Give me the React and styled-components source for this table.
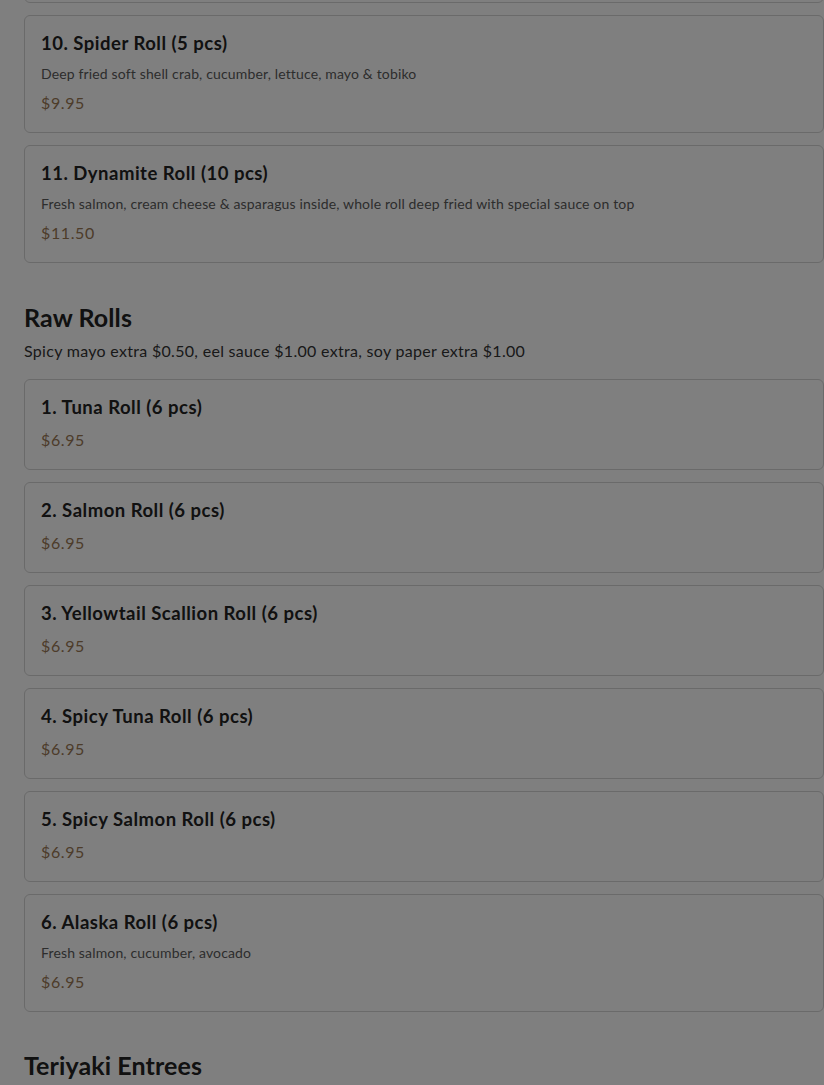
import React from "react";
import styled, { createGlobalStyle } from "styled-components";

const GlobalStyle = createGlobalStyle`
  html, body {
    margin: 0;
    padding: 0;
    background: #fff;
    overflow: hidden;
  }
  body {
    font-family: "Lato", "Noto Sans", sans-serif;
    color: #222;
  }
`;

// scrolled view: the previous card's bottom edge peeks in at the top
const Page = styled.main`
  padding: 0 0 40px 24px;
  margin-top: -115px;
`;

const Section = styled.section`
  margin-bottom: ${(p) => (p.$tight ? "39px" : "40px")};
`;

const SectionTitle = styled.h2`
  margin: 0;
  font-size: 25px;
  line-height: 29px;
  font-weight: 700;
  letter-spacing: 0.1px;
  color: #222;
`;

const SectionNote = styled.p`
  margin: 7px 0 0;
  font-size: 16px;
  line-height: 24px;
  letter-spacing: 0.3px;
  color: #333;
`;

const List = styled.div`
  display: flex;
  flex-direction: column;
  gap: 12px;
  margin-top: ${(p) => (p.$spaced ? "16px" : "0")};
`;

const Card = styled.article`
  background: #fff;
  border: 1px solid #d4d4d4;
  border-radius: 6px;
  padding: 16px 16px 17px;
  display: flex;
  flex-direction: column;
`;

const ItemName = styled.h3`
  margin: 0;
  font-size: 18.5px;
  line-height: 22px;
  font-weight: 700;
  letter-spacing: 0.5px;
  color: #222;
`;

const ItemDesc = styled.p`
  margin: 10px 0 0;
  font-size: 14px;
  line-height: 20px;
  letter-spacing: 0.15px;
  color: #5a5a5a;
`;

const Price = styled.div`
  margin-top: ${(p) => (p.$afterDesc ? "7px" : "10px")};
  font-size: 16px;
  line-height: 24px;
  letter-spacing: 0.6px;
  color: #9a7854;
`;

const Overlay = styled.div`
  position: fixed;
  inset: 0;
  background: rgba(0, 0, 0, 0.5);
`;

const specialRolls = [
  {
    name: "9. Rainbow Roll (8 pcs)",
    desc: "Crab stick, cucumber, avocado inside, assorted fish on top",
    price: "$12.95",
  },
  {
    name: "10. Spider Roll (5 pcs)",
    desc: "Deep fried soft shell crab, cucumber, lettuce, mayo & tobiko",
    price: "$9.95",
  },
  {
    name: "11. Dynamite Roll (10 pcs)",
    desc: "Fresh salmon, cream cheese & asparagus inside, whole roll deep fried with special sauce on top",
    price: "$11.50",
  },
];

const rawRolls = [
  { name: "1. Tuna Roll (6 pcs)", price: "$6.95" },
  { name: "2. Salmon Roll (6 pcs)", price: "$6.95" },
  { name: "3. Yellowtail Scallion Roll (6 pcs)", price: "$6.95" },
  { name: "4. Spicy Tuna Roll (6 pcs)", price: "$6.95" },
  { name: "5. Spicy Salmon Roll (6 pcs)", price: "$6.95" },
  {
    name: "6. Alaska Roll (6 pcs)",
    desc: "Fresh salmon, cucumber, avocado",
    price: "$6.95",
  },
];

const MenuItem = ({ item }) => (
  <Card>
    <ItemName>{item.name}</ItemName>
    {item.desc && <ItemDesc>{item.desc}</ItemDesc>}
    <Price $afterDesc={!!item.desc}>{item.price}</Price>
  </Card>
);

export default function App() {
  return (
    <>
      <GlobalStyle />
      <Page>
        <Section>
          <List>
            {specialRolls.map((item) => (
              <MenuItem key={item.name} item={item} />
            ))}
          </List>
        </Section>
        <Section $tight>
          <SectionTitle>Raw Rolls</SectionTitle>
          <SectionNote>
            Spicy mayo extra $0.50, eel sauce $1.00 extra, soy paper extra $1.00
          </SectionNote>
          <List $spaced>
            {rawRolls.map((item) => (
              <MenuItem key={item.name} item={item} />
            ))}
          </List>
        </Section>
        <Section>
          <SectionTitle>Teriyaki Entrees</SectionTitle>
        </Section>
      </Page>
      <Overlay />
    </>
  );
}
